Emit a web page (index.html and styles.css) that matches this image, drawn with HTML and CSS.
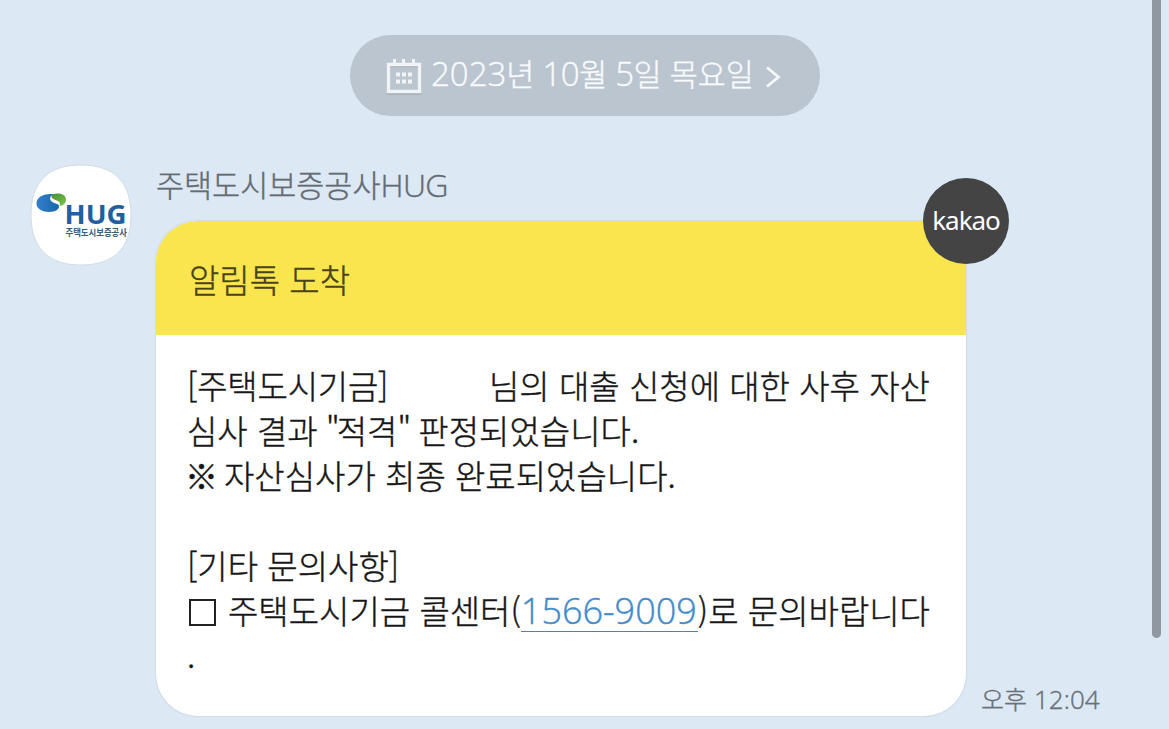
FILE: index.html
```html
<!DOCTYPE html>
<html lang="ko">
<head>
<meta charset="utf-8">
<title>주택도시보증공사HUG</title>
<link rel="stylesheet" href="styles.css">
</head>
<body>
<main class="chat">
  <div class="date">
    <svg class="calendar" width="36" height="37" viewBox="0 0 36 37" aria-hidden="true">
      <path class="cal-shadow" d="M2.500 6.500h31v27.500h-31z"/>
      <path class="cal-line" d="M2.500 5.500h31v27h-31z"/>
      <path class="cal-fill" d="M7 0h3v5H7zM16 0h3v5h-3zM26 0h3v5h-3zM10 13.500h4v4h-4zM16 13.500h4v4h-4zM22 13.500h4v4h-4zM10 20.500h4v4h-4zM16 20.500h4v4h-4zM22 20.500h4v4h-4z"/>
    </svg>
    <span class="date-text"><span class="num">2023</span>년 <span class="num">10</span>월 <span class="num">5</span>일 목요일</span>
    <svg class="chevron" width="16" height="24" viewBox="0 0 16 24" aria-hidden="true"><path d="M2 2.500l11.500 9.500L2 21.500"/></svg>
  </div>
  <section class="message">
    <div class="avatar">
      <svg width="102" height="102" viewBox="0 0 102 102" role="img" aria-label="HUG 주택도시보증공사">
        <defs>
          <linearGradient id="blue" x1="0" x2="1"><stop offset="0" stop-color="#347fca"/><stop offset="1" stop-color="#1768ab"/></linearGradient>
          <linearGradient id="green" x1="0" y1="0" x2="1" y2="1"><stop offset="0" stop-color="#3f8f3f"/><stop offset="1" stop-color="#86c542"/></linearGradient>
        </defs>
        <path class="avatar-shape" d="M51 1C84 1 101 18 101 51S84 101 51 101 1 84 1 51 18 1 51 1z"/>
        <path fill="url(#blue)" d="M22 30C12 29.500 6.500 34 6.500 39.500c0 5.500 6 8.500 12.500 8.500 6.500 0 10.500-3 10-6-.5-3-7-2.500-8.500-6-1-2.500.5-5 4-5.500z"/>
        <path fill="url(#green)" d="M22.500 30.500c7-2.500 13.500 0 13.500 5 0 3.500-2.500 6-6.500 6.500 1.500-3-.5-5-4-6-3.500-1-5-3.500-3-5.500z"/>
        <text class="logo-main" x="34.500" y="59.500" textLength="62" lengthAdjust="spacingAndGlyphs">HUG</text>
        <text class="logo-sub" x="35.500" y="72" textLength="61.500" lengthAdjust="spacingAndGlyphs">주택도시보증공사</text>
      </svg>
    </div>
    <div class="content">
      <div class="sender">주택도시보증공사<span class="sender-latin">HUG</span></div>
      <div class="bubble-row">
        <article class="card">
          <header class="card-head">알림톡 도착</header>
          <div class="body">
            <p><span class="fund">[주택도시기금]</span><span>님의 대출 신청에 대한 사후 자산</span></p>
            <p>심사 결과 <span class="quote">"</span>적격<span class="quote-end">"</span> 판정되었습니다.</p>
            <p><span class="note">※</span>자산심사가 최종 완료되었습니다.</p>
            <p></p>
            <p>[기타 문의사항]</p>
            <p><i class="box"></i>주택도시기금 콜센터(<a class="phone">1566-9009</a>)로 문의바랍니다</p>
            <p>.</p>
          </div>
          <div class="badge">kakao</div>
        </article>
        <time class="time">오후 <span class="clock">12:04</span></time>
      </div>
    </div>
  </section>
  <div class="scrollbar"></div>
</main>
</body>
</html>
```
FILE: styles.css
```css
* { box-sizing: border-box; }
body { margin: 0; background: #dce8f4; }
p { margin: 0; }
.chat {
  position: relative;
  width: 1169px;
  height: 729px;
  padding-top: 35px;
  overflow: hidden;
  font-family: "Noto Sans CJK KR", sans-serif;
  font-weight: 300;
  white-space: nowrap;
  -webkit-text-stroke: 0.4px;
}
.date {
  display: flex;
  align-items: center;
  width: 470px;
  height: 81px;
  margin-left: 350px;
  padding-left: 36px;
  border-radius: 41px;
  background: #bac5cf;
  color: #f8fafc;
}
.calendar { flex: none; margin-top: 3px; }
.cal-shadow, .cal-line { fill: none; stroke-width: 3.500; }
.cal-shadow { stroke: #a2acb5; }
.cal-line { stroke: #f1f4f7; }
.cal-fill { fill: #f1f4f7; }
.date-text {
  width: 322px;
  margin-left: 9px;
  font-size: 30.500px;
  line-height: 50px;
  padding-bottom: 5px;
  word-spacing: -0.500px;
}
.num { font-family: "Open Sans", sans-serif; font-size: 33px; line-height: 1; letter-spacing: -0.500px; }
.num:first-child { letter-spacing: 0; }
.chevron { margin: 3px 0 0 12px; fill: none; stroke: #f5f8fa; stroke-width: 2.800; }
.message { display: flex; margin-top: 48px; padding-left: 30px; }
.avatar { width: 126px; -webkit-text-stroke: 0; }
.avatar svg { display: block; }
.avatar-shape { fill: #fff; stroke: #d2dce5; stroke-width: 1; }
.logo-main { font: 700 27px "Open Sans", sans-serif; fill: #225f9f; }
.logo-sub { font: 700 9px "Noto Sans CJK KR", sans-serif; fill: #365d7b; }
.sender { height: 57px; line-height: 40px; font-size: 30.500px; color: #646b72; }
.sender-latin { font-family: "Open Sans", sans-serif; font-size: 32px; letter-spacing: -0.6px; line-height: 1; }
.bubble-row { display: flex; align-items: flex-end; }
.card {
  position: relative;
  width: 810px;
  height: 495px;
  border-radius: 42px;
  background: #fff;
  box-shadow: 0 0 1px 0.500px #cfdbe6;
}
.card-head {
  height: 114px;
  padding: 3px 0 0 33px;
  border-radius: 42px 42px 0 0;
  background: #f9e54d;
  color: #494318;
  font-size: 33px;
  line-height: 110px;
}
.body {
  padding: 28px 0 0 31px;
  font-size: 33px;
  color: #161616;
}
.body p { height: 45px; line-height: 45px; }
.fund { display: inline-block; width: 302px; letter-spacing: -0.2px; }
.note { display: inline-block; width: 38px; margin-left: -2px; margin-right: 1px; }
.quote { margin-left: -1px; letter-spacing: -3px; }
.quote-end { letter-spacing: -2px; }
.box {
  display: inline-block;
  width: 27px;
  height: 27px;
  margin: 0 12px 0 2px;
  border: 2px solid #222;
  vertical-align: -2px;
}
.phone {
  display: inline-block;
  width: 177px;
  height: 42px;
  line-height: 41px;
  border-bottom: 1px solid #3f86bf;
  color: #438bcb;
  font-family: "Open Sans", sans-serif;
  font-size: 36px;
}
.badge {
  position: absolute;
  top: -43px;
  right: -43px;
  width: 86px;
  height: 86px;
  border-radius: 50%;
  background: #444;
  color: #fff;
  font: 400 26px/84px "Noto Sans", sans-serif;
  letter-spacing: -1px;
  text-align: center;
  -webkit-text-stroke: 0;
}
.time { margin-left: 15px; font-size: 25px; line-height: 36px; color: #687078; }
.clock { font-family: "Open Sans", sans-serif; font-size: 26px; line-height: 1; }
.scrollbar {
  position: absolute;
  top: -10px;
  right: 8px;
  width: 9px;
  height: 648px;
  border-radius: 5px;
  background: #8f98a1;
}
```
